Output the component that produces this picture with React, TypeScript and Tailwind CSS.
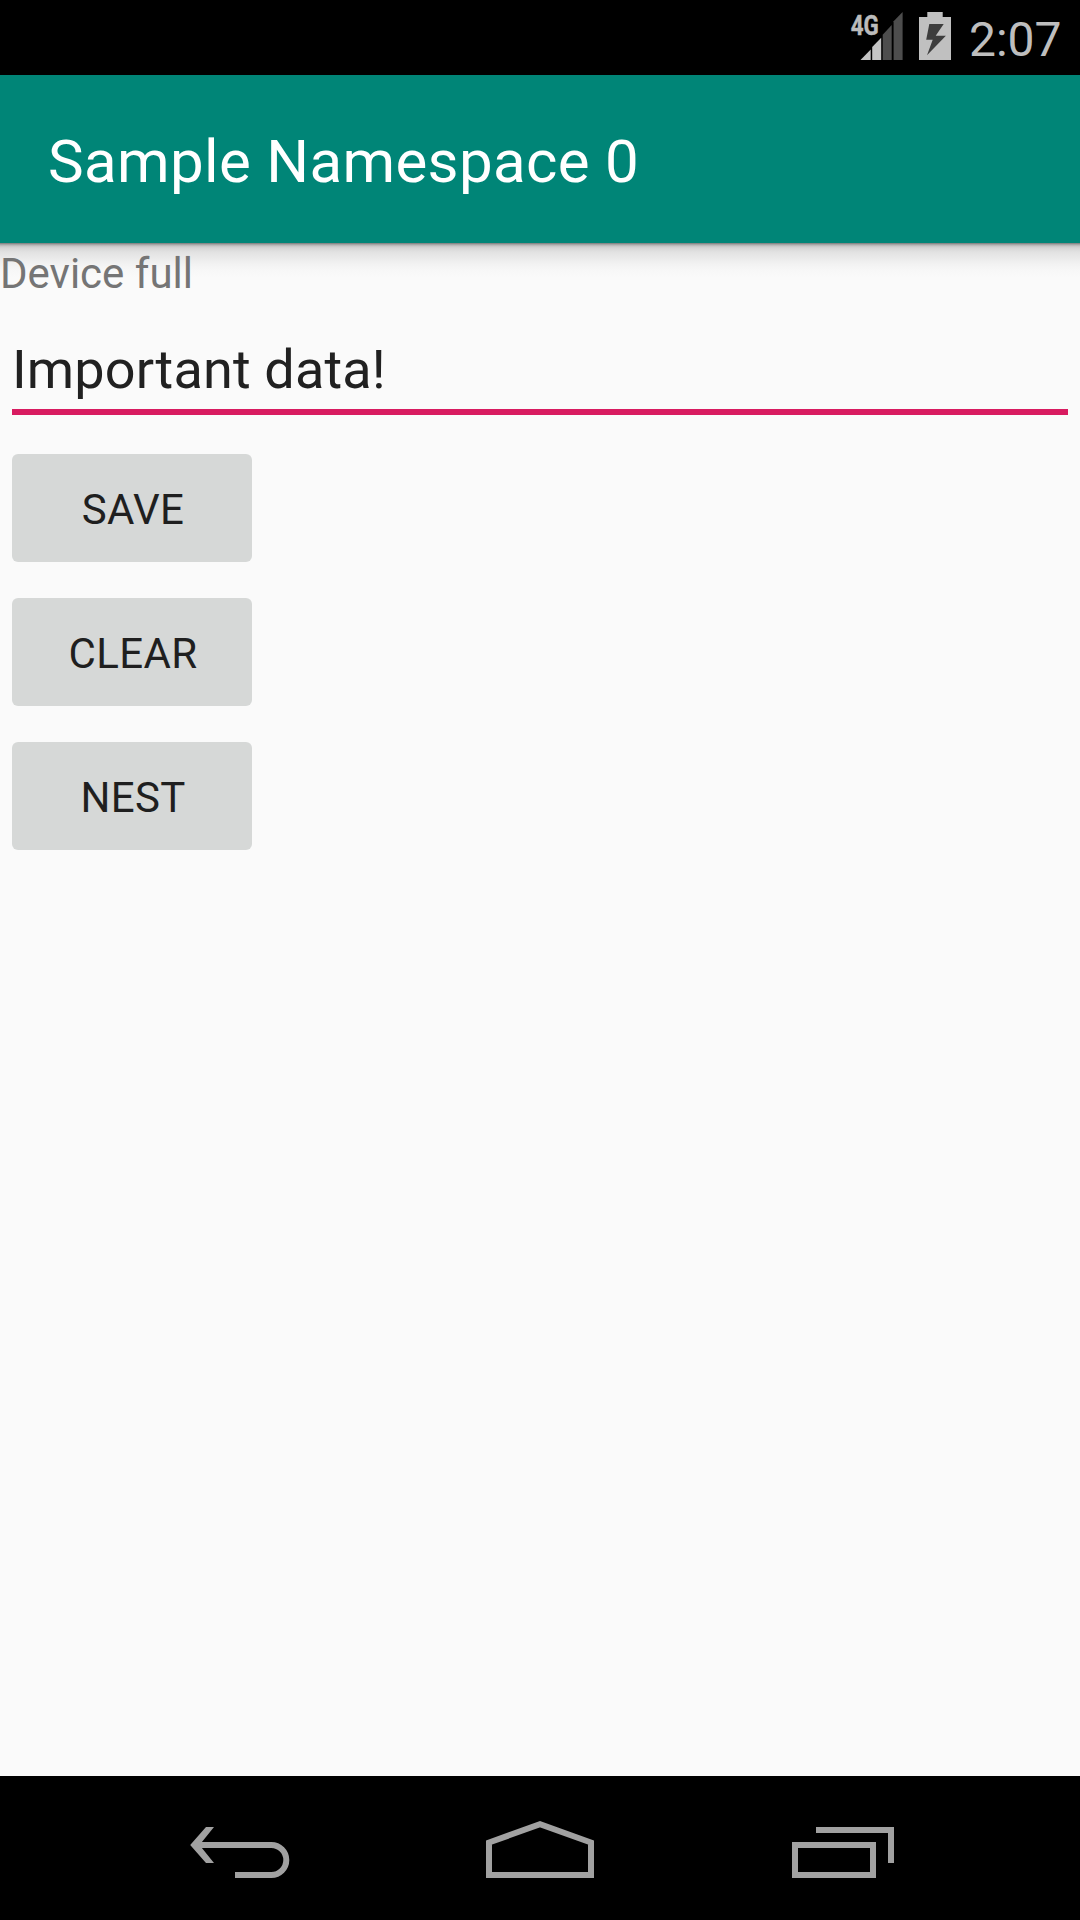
import React from "react";

function SignalIcon() {
  return (
    <svg className="block h-[75px] w-[60px]" viewBox="0 0 60 75">
      <g fill="#4d4d4d">
        <path d="M32.700 34.700 41.700 25V60h-9z" />
        <path d="M43.600 21.300 52.600 12V60h-9z" />
      </g>
      <g fill="#c4c4c4">
        <path d="M10.500 60 20.700 49.500V60z" />
        <path d="M22.200 47 31.200 37.800V60h-9z" />
      </g>
      <text x="0.7" y="34.8" fill="#bcbcbc" stroke="#bcbcbc" strokeWidth="0.5" fontSize="28" fontWeight="700" textLength="28" lengthAdjust="spacingAndGlyphs">
        4G
      </text>
    </svg>
  );
}

function BatteryIcon() {
  return (
    <svg className="block h-[75px] w-[32px]" viewBox="0 0 32 75">
      <path d="M0 17h8.300v-5h15.400v5H32v43H0z" fill="#c0c0c0" />
      <path d="M10.300 24H24.700L16.700 35.700H26.900L8 55.200 13.700 39.700H7.200z" fill="#3d3d3d" />
    </svg>
  );
}

function ActionButton({ label }: { label: string }) {
  return (
    <button className="flex h-[108px] w-[240px] items-center justify-center rounded-[6px] bg-[#d6d8d7] pt-[3px] pl-[2px] text-[42px] leading-none tracking-[0.35px] text-[#1f1f1f]">
      {label}
    </button>
  );
}

export default function App() {
  return (
    <div className="flex h-[1920px] w-[1080px] flex-col overflow-hidden bg-[#fafafa] font-['Roboto',sans-serif]">
      <div className="flex h-[75px] shrink-0 justify-end bg-black pr-[18px] text-[#bebebe]">
        <SignalIcon />
        <div className="ml-[9px]">
          <BatteryIcon />
        </div>
        <div className="ml-[18px] w-[93px] pt-[3px] text-[48px] leading-[73px] whitespace-nowrap">2:07</div>
      </div>

      <header className="flex h-[168px] shrink-0 items-center bg-[#008577] pl-[48px] text-[60px] leading-[70px] tracking-[0.35px] text-white">
        <h1 className="pt-[5px] whitespace-nowrap">Sample Namespace 0</h1>
      </header>

      <main className="flex min-h-0 flex-1 flex-col">
        <div className="h-[60px] bg-[linear-gradient(to_bottom,#7a7a7a_0px,#a5a5a5_1.5px,#c4c4c4_3px,#d5d5d5_5px,#e2e2e2_9px,#eaeaea_15px,#f2f2f2_21px,#f7f7f7_27px,#fafafa_34px)] text-[42px] leading-[61px] text-[#757575]">
          Device full
        </div>
        <div className="mx-[12px] mt-[28px] h-[84px] border-b-[6px] border-[#d81b60] text-[54px] leading-[77px] tracking-[0.16px] text-[#212121]">
          Important data!
        </div>
        <div className="mt-[39px] ml-[12px] flex flex-col gap-[36px]">
          <ActionButton label="SAVE" />
          <ActionButton label="CLEAR" />
          <ActionButton label="NEST" />
        </div>
      </main>

      <nav className="flex h-[144px] shrink-0 items-center justify-between bg-black px-[150px]">
        <svg className="h-[144px] w-[180px]" viewBox="0 0 180 144" fill="none">
          <path d="M46 69H121.300A15 15 0 0 1 121.300 99H85" stroke="#a1a1a1" strokeWidth="6" />
          <path d="M40.200 69 56 51H64L49.500 69 64 87H56z" fill="#a1a1a1" />
        </svg>
        <svg className="h-[144px] w-[180px]" viewBox="0 0 180 144" fill="none">
          <path d="M39 99V66.500L90 48.200 141 66.500V99z" stroke="#a1a1a1" strokeWidth="6" />
        </svg>
        <svg className="h-[144px] w-[180px]" viewBox="0 0 180 144" fill="none">
          <path d="M45 69H123V99H45zM66 54H141V87" stroke="#a1a1a1" strokeWidth="6" />
        </svg>
      </nav>
    </div>
  );
}
